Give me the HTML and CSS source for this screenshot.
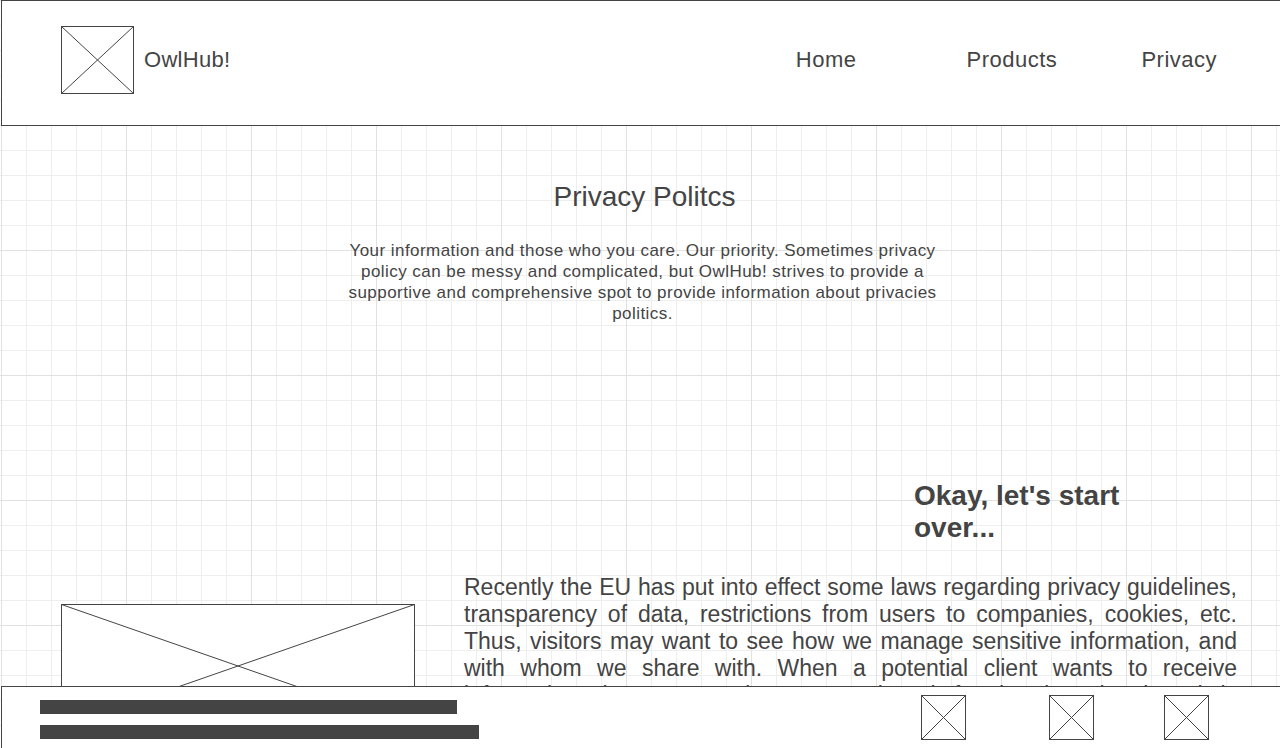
FILE: index.html
```html
<!DOCTYPE html>
<html lang="en">
<head>
<meta charset="utf-8">
<title>OwlHub! - Privacy</title>
<link rel="stylesheet" href="styles.css">
</head>
<body>
<div class="page">
  <header class="site-header">
    <div class="brand">
      <svg class="ph-logo" width="73" height="68" viewBox="0 0 73 68" aria-hidden="true">
        <rect x="0.5" y="0.5" width="72" height="67" fill="#fff" stroke="#444"/>
        <line x1="0.5" y1="0.5" x2="72.5" y2="67.5" stroke="#444"/>
        <line x1="72.5" y1="0.5" x2="0.5" y2="67.5" stroke="#444"/>
      </svg>
      <span class="brand-name">OwlHub!</span>
    </div>
    <nav class="nav">
      <a class="nav-link nav-home" href="#">Home</a>
      <a class="nav-link nav-products" href="#">Products</a>
      <a class="nav-link nav-privacy" href="#">Privacy</a>
    </nav>
  </header>

  <section class="hero">
    <h1 class="hero-title">Privacy Politcs</h1>
    <p class="hero-text">Your information and those who you care. Our priority. Sometimes privacy policy can be messy and complicated, but OwlHub! strives to provide a supportive and comprehensive spot to provide information about privacies politics.</p>
  </section>

  <section class="content">
    <h2 class="content-heading">Okay, let's start over...</h2>
    <div class="content-row">
      <div class="content-media">
        <svg class="ph-image" width="354" height="124" viewBox="0 0 354 124" aria-hidden="true">
          <rect x="0.5" y="0.5" width="353" height="123" fill="#fff" stroke="#444"/>
          <line x1="0.5" y1="0.5" x2="353.5" y2="123.5" stroke="#444"/>
          <line x1="353.5" y1="0.5" x2="0.5" y2="123.5" stroke="#444"/>
        </svg>
      </div>
      <p class="content-text">Recently the EU has put into effect some laws regarding privacy guidelines, transparency of data, restrictions from users to companies, cookies, etc. Thus, visitors may want to see how we manage sensitive information, and with whom we share with. When a potential client wants to receive information about our products, we only ask for the data that is strictly necessary, and we never sell it to third parties. You can ask us at any time to review, correct or delete the information we keep about you.</p>
    </div>
  </section>

  <footer class="site-footer">
    <div class="footer-bars">
      <span class="bar bar-1"></span>
      <span class="bar bar-2"></span>
    </div>
    <div class="footer-icons">
      <svg class="ph-icon" width="45" height="45" viewBox="0 0 45 45" aria-hidden="true">
        <rect x="0.5" y="0.5" width="44" height="44" fill="#fff" stroke="#444"/>
        <line x1="0.5" y1="0.5" x2="44.5" y2="44.5" stroke="#444"/>
        <line x1="44.5" y1="0.5" x2="0.5" y2="44.5" stroke="#444"/>
      </svg>
      <svg class="ph-icon ph-icon-2" width="45" height="45" viewBox="0 0 45 45" aria-hidden="true">
        <rect x="0.5" y="0.5" width="44" height="44" fill="#fff" stroke="#444"/>
        <line x1="0.5" y1="0.5" x2="44.5" y2="44.5" stroke="#444"/>
        <line x1="44.5" y1="0.5" x2="0.5" y2="44.5" stroke="#444"/>
      </svg>
      <svg class="ph-icon ph-icon-3" width="45" height="45" viewBox="0 0 45 45" aria-hidden="true">
        <rect x="0.5" y="0.5" width="44" height="44" fill="#fff" stroke="#444"/>
        <line x1="0.5" y1="0.5" x2="44.5" y2="44.5" stroke="#444"/>
        <line x1="44.5" y1="0.5" x2="0.5" y2="44.5" stroke="#444"/>
      </svg>
    </div>
  </footer>
</div>
</body>
</html>
```

FILE: styles.css
```css
html, body {
  margin: 0;
  padding: 0;
}

body {
  font-family: "Liberation Sans", Arial, Helvetica, sans-serif;
  color: #444;
  background-color: #fff;
  background-image:
    linear-gradient(to right, #e1e1e1 1px, transparent 1px),
    linear-gradient(to bottom, #e1e1e1 1px, transparent 1px),
    linear-gradient(to right, #eeeeee 1px, transparent 1px),
    linear-gradient(to bottom, #eeeeee 1px, transparent 1px);
  background-size: 125px 125px, 125px 125px, 25px 25px, 25px 25px;
  background-position: 1px 0, 1px 0, 1px 0, 1px 0;
  min-height: 748px;
  overflow: hidden;
}

.page {
  margin-left: 1px;
}

/* Header */
.site-header {
  box-sizing: border-box;
  height: 126px;
  background: #fff;
  border-top: 1px solid #444;
  border-left: 1px solid #444;
  border-bottom: 1px solid #444;
  display: flex;
  align-items: center;
  padding: 25px 63px 31px 59px;
}

.brand {
  display: flex;
  align-items: center;
  gap: 10px;
}

.ph-logo {
  display: block;
}

.brand-name {
  font-size: 22px;
  letter-spacing: 0.3px;
  color: #444;
}

.nav {
  margin-left: auto;
  display: flex;
  align-items: center;
}

.nav-link {
  font-size: 22px;
  letter-spacing: 0.5px;
  color: #444;
  text-decoration: none;
}

.nav-products {
  margin-left: 110px;
}

.nav-privacy {
  margin-left: 84px;
}

/* Hero */
.hero {
  padding-top: 54px;
  display: flex;
  flex-direction: column;
  align-items: center;
}

.hero-title {
  margin: 0;
  padding-left: 8px;
  font-size: 28px;
  line-height: 34px;
  font-weight: normal;
  letter-spacing: 0;
  color: #444;
}

.hero-text {
  margin: 26px 0 0;
  padding-left: 4px;
  width: 600px;
  font-size: 17px;
  line-height: 21px;
  letter-spacing: 0.45px;
  text-align: center;
  color: #444;
}

/* Content */
.content {
  padding-top: 156px;
}

.content-heading {
  margin: 0 0 0 913px;
  width: 240px;
  font-size: 28px;
  line-height: 32px;
  font-weight: bold;
  color: #444;
}

.content-row {
  margin-top: 30px;
  display: flex;
  align-items: flex-start;
  padding-left: 60px;
}

.content-media {
  margin-top: 30px;
  flex: 0 0 354px;
}

.ph-image {
  display: block;
}

.content-text {
  margin: 0 0 0 49px;
  width: 773px;
  font-size: 23px;
  line-height: 27px;
  text-align: justify;
  color: #444;
}

/* Footer */
.site-footer {
  position: fixed;
  left: 1px;
  right: 0;
  bottom: 0;
  box-sizing: border-box;
  height: 62px;
  background: #fff;
  border-top: 1px solid #444;
  border-left: 1px solid #444;
  display: flex;
  align-items: flex-start;
  padding: 0 71px 0 38px;
}

.footer-bars {
  padding-top: 13px;
  display: flex;
  flex-direction: column;
  gap: 11px;
}

.bar {
  display: block;
  height: 14px;
  background: #444;
}

.bar-1 {
  width: 417px;
}

.bar-2 {
  width: 439px;
}

.footer-icons {
  margin-left: auto;
  padding-top: 8px;
  display: flex;
}

.ph-icon {
  display: block;
}

.ph-icon-2 {
  margin-left: 83px;
}

.ph-icon-3 {
  margin-left: 70px;
}
```
